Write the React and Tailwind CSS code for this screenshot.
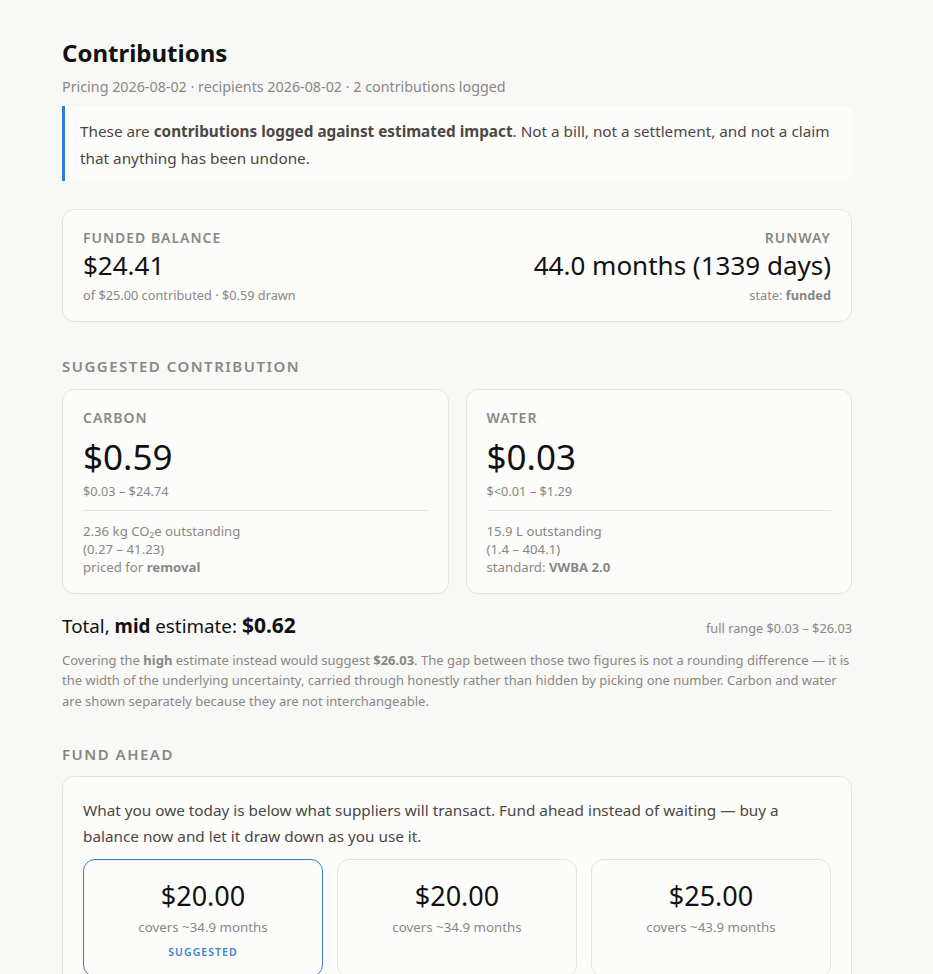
import React from 'react';

const FONT = { fontFamily: '"Noto Sans", "Open Sans", sans-serif' };

const Label = ({ children, className = '' }) => (
  <div className={`font-semibold uppercase text-[#8a8784] ${className}`}>{children}</div>
);

const ImpactCard = ({ title, amount, range, lines }) => (
  <div className="rounded-xl border border-[#e4e3e1] bg-[#fcfcfb] px-5 pt-[17px] pb-[17px]">
    <Label className="text-[14px] leading-[21px] tracking-[0.07em]">{title}</Label>
    <div className="mt-[7px] text-[35px] leading-[44px] text-[#111]">{amount}</div>
    <div className="mt-[3px] text-[12.75px] leading-[19px] text-[#8a8784]">{range}</div>
    <div className="mt-[9px] border-t border-[#e4e3e1] pt-[11px] text-[13.2px] leading-[18px] text-[#8a8784]">
      {lines}
    </div>
  </div>
);

const FundOption = ({ amount, covers, suggested }) => (
  <div
    className={`flex h-[118px] flex-col items-center rounded-xl border bg-[#fcfcfb] pt-[19px] ${
      suggested ? 'border-[#3a7fd5]' : 'border-[#e4e3e1]'
    }`}
  >
    <div className="text-[27px] leading-[34px] text-[#111]">{amount}</div>
    <div className="mt-[4px] text-[13.3px] leading-[20px] text-[#8a8784]">{covers}</div>
    {suggested && (
      <div className="mt-[7px] text-[10.5px] font-semibold uppercase leading-[16px] tracking-[0.1em] text-[#3a7fd5]">
        Suggested
      </div>
    )}
  </div>
);

export default function App() {
  return (
    <div className="min-h-screen bg-[#f8f8f7]" style={FONT}>
      <div className="ml-[62px] w-[790px] pt-[36px] pb-10">
        <h1 className="text-[24px] font-bold leading-[34px] text-[#111]">Contributions</h1>
        <p className="mt-[5.5px] text-[14.3px] leading-[21px] text-[#8a8784]">
          Pricing 2026-08-02 · recipients 2026-08-02 · 2 contributions logged
        </p>

        <div className="mt-[9.5px] rounded-r-lg border-l-[3px] border-[#2f7bd9] bg-[#fcfcfb] pt-[12px] pb-[9px] pl-[15px] pr-4 text-[15.3px] leading-[27px] text-[#4a4744]">
          These are <strong className="font-bold">contributions logged against estimated impact</strong>. Not a bill, not a
          settlement, and not a claim that anything has been undone.
        </div>

        <div className="mt-[28px] flex items-start justify-between rounded-xl border border-[#e4e3e1] bg-[#fcfcfb] px-5 pt-[18px] pb-[16px]">
          <div>
            <Label className="text-[14px] leading-[20px] tracking-[0.07em]">Funded balance</Label>
            <div className="text-[26px] leading-[34px] text-[#111]">$24.41</div>
            <div className="mt-[4px] text-[12.75px] leading-[19px] text-[#8a8784]">of $25.00 contributed · $0.59 drawn</div>
          </div>
          <div className="text-right">
            <Label className="text-[14px] leading-[20px] tracking-[0.07em]">Runway</Label>
            <div className="text-[26px] leading-[34px] text-[#111]">44.0 months (1339 days)</div>
            <div className="mt-[4px] text-[12.75px] leading-[19px] text-[#8a8784]">
              state: <strong className="font-bold">funded</strong>
            </div>
          </div>
        </div>

        <Label className="mt-[33px] text-[15px] leading-[22px] tracking-[0.1em]">Suggested contribution</Label>

        <div className="mt-[12px] grid grid-cols-2 gap-[17px]">
          <ImpactCard
            title="Carbon"
            amount="$0.59"
            range="$0.03 – $24.74"
            lines={
              <>
                <div>2.36 kg CO₂e outstanding</div>
                <div>(0.27 – 41.23)</div>
                <div>
                  priced for <strong className="font-bold">removal</strong>
                </div>
              </>
            }
          />
          <ImpactCard
            title="Water"
            amount="$0.03"
            range="$<0.01 – $1.29"
            lines={
              <>
                <div>15.9 L outstanding</div>
                <div>(1.4 – 404.1)</div>
                <div>
                  standard: <strong className="font-bold">VWBA 2.0</strong>
                </div>
              </>
            }
          />
        </div>

        <div className="mt-[16px] flex items-baseline justify-between">
          <div className="text-[18.8px] text-[#111]">
            Total, <strong className="font-bold">mid</strong> estimate:{' '}
            <strong className="text-[21px] font-bold">$0.62</strong>
          </div>
          <div className="text-[12.75px] text-[#8a8784]">full range $0.03 – $26.03</div>
        </div>

        <p className="mt-[8px] text-[13px] leading-[20.5px] text-[#8a8784]">
          Covering the <strong className="font-bold">high</strong> estimate instead would suggest{' '}
          <strong className="font-bold">$26.03</strong>. The gap between those two figures is not a rounding difference — it
          is the width of the underlying uncertainty, carried through honestly rather than hidden by picking one number.
          Carbon and water are shown separately because they are not interchangeable.
        </p>

        <Label className="mt-[32px] text-[15px] leading-[22px] tracking-[0.1em]">Fund ahead</Label>

        <div className="mt-[11px] rounded-xl border border-[#e4e3e1] bg-[#fcfcfb] px-5 pt-[20px] pb-5">
          <p className="text-[15.3px] leading-[26px] text-[#4a4744]">
            What you owe today is below what suppliers will transact. Fund ahead instead of waiting — buy a balance now and
            let it draw down as you use it.
          </p>
          <div className="mt-[10px] grid grid-cols-3 gap-[14px]">
            <FundOption amount="$20.00" covers="covers ~34.9 months" suggested />
            <FundOption amount="$20.00" covers="covers ~34.9 months" />
            <FundOption amount="$25.00" covers="covers ~43.9 months" />
          </div>
        </div>
      </div>
    </div>
  );
}
